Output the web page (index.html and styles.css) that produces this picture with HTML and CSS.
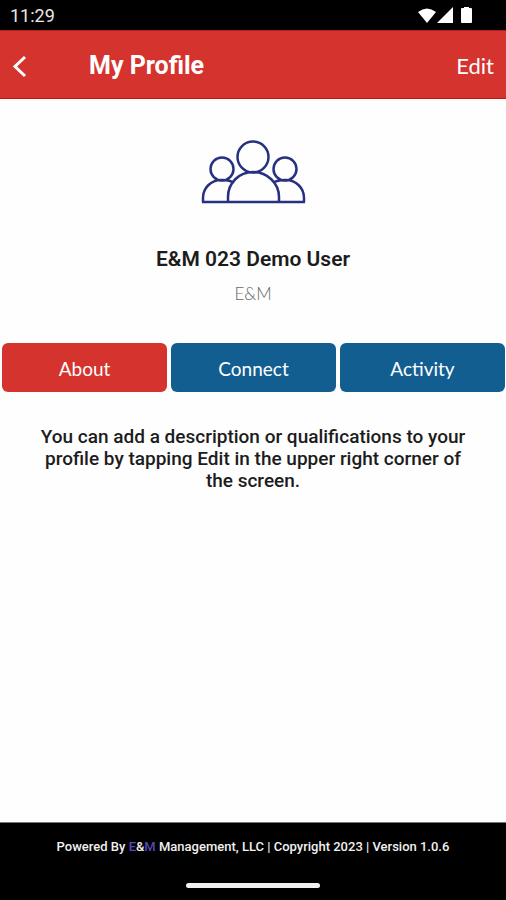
FILE: index.html
```
<!DOCTYPE html>
<html lang="en">
<head>
<meta charset="utf-8">
<meta name="viewport" content="width=device-width, initial-scale=1">
<title>My Profile</title>
<link rel="stylesheet" href="styles.css">
</head>
<body>
<div class="status">
  <span class="clock">11:29</span>
  <svg class="status-icons" width="60" height="20" viewBox="0 0 60 20" fill="#fff" aria-hidden="true">
    <path d="M0 5Q9 -2 18 5L9 16Z"/>
    <path d="M19 16L35 0V16Z"/>
    <path d="M46 0h5v1h2q1 0 1 1v13q0 1-1 1h-9q-1 0-1-1V2q0-1 1-1h2z"/>
  </svg>
</div>
<header class="bar">
  <button class="back" type="button" aria-label="Back">
    <svg width="16" height="24" viewBox="0 0 16 24" fill="none" stroke="#fff" stroke-width="3" aria-hidden="true"><path d="M13 3L3 12.500L13 22"/></svg>
  </button>
  <h1 class="title">My Profile</h1>
  <a class="edit" href="#edit">Edit</a>
</header>
<main class="profile">
  <svg class="avatar" width="106" height="66" viewBox="0 0 106 66" fill="none" stroke="#27317f" stroke-width="2.500" aria-hidden="true">
    <circle cx="53" cy="18" r="15.500"/>
    <circle cx="22" cy="30" r="11.500"/>
    <circle cx="85" cy="30" r="11.500"/>
    <path d="M3 63V59C3 49 11 41 21 41H23C27 41 31 42 34 44M73 44C76 42 80 41 84 41H86C96 41 104 49 104 59V63M28 63V58C28 44 39 33 53 33S79 44 79 58V63M2 63H105"/>
  </svg>
  <h2 class="name">E&amp;M 023 Demo User</h2>
  <p class="company">E&amp;M</p>
  <nav class="tabs">
    <button class="tab active" type="button">About</button>
    <button class="tab" type="button">Connect</button>
    <button class="tab" type="button">Activity</button>
  </nav>
  <p class="about">You can add a description or qualifications to your profile by tapping Edit in the upper right corner of the screen.</p>
</main>
<footer class="footer">
  <p class="legal">Powered By <span class="brand">E</span>&amp;<span class="brand">M</span> Management, LLC | Copyright 2023 | Version 1.0.6</p>
  <div class="handle"></div>
</footer>
</body>
</html>
```
FILE: styles.css
```
* {
  box-sizing: border-box;
}

body {
  margin: 0;
  min-height: 100vh;
  display: flex;
  flex-direction: column;
  background: #fefefe;
  color: #1c1c1c;
  font-family: Roboto, sans-serif;
}

h1,
h2,
p {
  margin: 0;
}

button {
  border: 0;
  font: inherit;
  color: inherit;
}

.status {
  display: flex;
  justify-content: space-between;
  align-items: center;
  height: 30px;
  padding: 2px 28px 0 10px;
  background: #000;
  color: #e8e8e8;
}

.clock {
  font-size: 18px;
  line-height: 20px;
}

.status-icons {
  margin-top: 2px;
}

.bar {
  display: flex;
  align-items: center;
  height: 69px;
  padding: 2px 12px 0;
  background: #d5332e;
  border-top: 1px solid #b81c18;
  border-bottom: 1px solid #c4120f;
  color: #fff;
}

.back {
  display: flex;
  width: 77px;
  padding: 0;
  background: none;
}

.title {
  flex: 1;
  font-size: 25px;
  line-height: 32px;
  font-weight: 700;
}

.edit {
  color: #fff;
  font-family: Lato, sans-serif;
  font-size: 22px;
  line-height: 28px;
  text-decoration: none;
}

.profile {
  flex: 1;
  display: flex;
  flex-direction: column;
  align-items: center;
  padding-top: 40px;
  text-align: center;
}

.name {
  margin-top: 40px;
  font-size: 21px;
  line-height: 28px;
  font-weight: 600;
}

.company {
  margin-top: 9px;
  color: #666;
  font-family: Lato, sans-serif;
  font-size: 17px;
  line-height: 24px;
  font-weight: 300;
}

.tabs {
  display: flex;
  gap: 4px;
  width: 100%;
  margin-top: 37px;
  padding: 0 1px 0 2px;
}

.tab {
  flex: 1;
  height: 49px;
  padding: 2px 0 0;
  border-radius: 6px;
  background: #125e90;
  color: #fff;
  font-family: Lato, sans-serif;
  font-size: 19px;
}

.tab.active {
  background: #d5332e;
}

.about {
  margin-top: 34px;
  padding: 0 32px;
  font-size: 19px;
  line-height: 22px;
  font-weight: 500;
}

.footer {
  display: flex;
  flex-direction: column;
  align-items: center;
  padding: 15px 12px 12px;
  border-top: 1px solid #777;
  background: #000;
  color: #f0f0f0;
}

.legal {
  font-size: 13px;
  line-height: 18px;
  font-weight: 500;
  text-align: center;
}

.brand {
  color: #5848b8;
}

.handle {
  width: 134px;
  height: 5px;
  margin-top: 27px;
  border-radius: 3px;
  background: #f0f0f0;
}
```
